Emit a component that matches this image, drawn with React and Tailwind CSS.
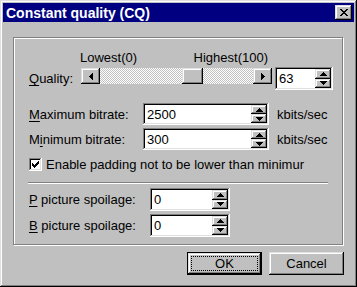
import React from "react";

const raised =
  "shadow-[inset_-1px_-1px_#000,inset_1px_1px_#dfdfdf,inset_-2px_-2px_#808080,inset_2px_2px_#fff]";
const sunken =
  "shadow-[inset_-1px_-1px_#fff,inset_1px_1px_#808080,inset_-2px_-2px_#dfdfdf,inset_2px_2px_#000]";

function Arrow({ dir }) {
  if (dir === "up")
    return (
      <svg width="7" height="4" viewBox="0 0 7 4" shapeRendering="crispEdges">
        <path d="M3 0h1v1h1v1h1v1h1v1H0V3h1V2h1V1h1z" fill="#000" />
      </svg>
    );
  if (dir === "down")
    return (
      <svg width="7" height="4" viewBox="0 0 7 4" shapeRendering="crispEdges">
        <path d="M0 0h7v1H6v1H5v1H4v1H3V3H2V2H1V1H0z" fill="#000" />
      </svg>
    );
  if (dir === "left")
    return (
      <svg width="4" height="7" viewBox="0 0 4 7" shapeRendering="crispEdges">
        <path d="M3 0h1v7H3V6H2V5H1V4H0V3h1V2h1V1h1z" fill="#000" />
      </svg>
    );
  return (
    <svg width="4" height="7" viewBox="0 0 4 7" shapeRendering="crispEdges">
      <path d="M0 0h1v1h1v1h1v1h1v1H3v1H2v1H1v1H0z" fill="#000" />
    </svg>
  );
}

function Spin({ value, w, h }) {
  return (
    <div
      className={`flex bg-white p-[2px] ${sunken}`}
      style={{ width: w, height: h }}
    >
      <div className="flex-1 pl-[2px] leading-[15px] flex items-center text-black">
        {value}
      </div>
      <div className="flex flex-col w-[16px]">
        <div className={`flex-1 bg-[#c0c0c0] flex items-center justify-center ${raised}`}>
          <Arrow dir="up" />
        </div>
        <div className={`flex-1 bg-[#c0c0c0] flex items-center justify-center ${raised}`}>
          <Arrow dir="down" />
        </div>
      </div>
    </div>
  );
}

function U({ children }) {
  return <span className="underline underline-offset-[2px]">{children}</span>;
}

export default function App() {
  return (
    <div
      className="w-[357px] h-[287px] bg-[#c0c0c0] p-[3px] flex flex-col text-[13px] leading-[15px] text-black shadow-[inset_-1px_-1px_#000,inset_1px_1px_#dfdfdf,inset_-2px_-2px_#808080,inset_2px_2px_#fff]"
      style={{ fontFamily: '"Liberation Sans", Arial, sans-serif' }}
    >
      {/* Title bar */}
      <div className="h-[19px] bg-[#000080] flex items-center pl-[3px] pr-[2px]">
        <span className="text-white font-bold text-[14px] leading-[16px]">
          Constant quality (CQ)
        </span>
        <div className={`ml-auto w-[17px] h-[15px] bg-[#c0c0c0] flex items-center justify-center ${raised}`}>
          <svg width="8" height="7" viewBox="0 0 8 7" shapeRendering="crispEdges">
            <path
              d="M0 0h2v1h1v1h2V1h1V0h2v1H7v1H6v1H5v1h1v1h1v1h1v1H6V6H5V5H3v1H2v1H0V6h1V5h1V4h1V3H2V2H1V1H0z"
              fill="#000"
            />
          </svg>
        </div>
      </div>

      {/* Group box */}
      <div className="ml-[10px] mt-[15px] w-[330px] h-[208px] border border-[#808080] shadow-[1px_1px_0_#fff,inset_1px_1px_0_#fff] pl-[15px] flex flex-col">
        {/* labels */}
        <div className="mt-[12px] ml-[51px] w-[192px] flex justify-between pr-[4px]">
          <span>Lowest(0)</span>
          <span>Highest(100)</span>
        </div>
        {/* slider row */}
        <div className="mt-[2px] flex items-start">
          <span className="w-[52px] mt-[4px]">
            <U>Q</U>uality:
          </span>
          <div className="mt-[1px] w-[191px] h-[16px] flex">
            <div className={`w-[19px] h-[16px] bg-[#c0c0c0] flex items-center justify-center ${raised}`}>
              <Arrow dir="left" />
            </div>
            <div className="flex-1 h-[16px] bg-[image:repeating-conic-gradient(#fff_0%_25%,#c0c0c0_0%_50%)] bg-[length:2px_2px] flex">
              <div className={`ml-[82px] w-[21px] h-[16px] bg-[#c0c0c0] ${raised}`} />
            </div>
            <div className={`w-[19px] h-[16px] bg-[#c0c0c0] flex items-center justify-center ${raised}`}>
              <Arrow dir="right" />
            </div>
          </div>
          <div className="ml-[3px]">
            <Spin value="63" w={58} h={23} />
          </div>
        </div>
        {/* max bitrate */}
        <div className="mt-[13px] flex items-center">
          <span className="w-[114px]">
            <U>M</U>aximum bitrate:
          </span>
          <Spin value="2500" w={126} h={22} />
          <span className="ml-[8px]">kbits/sec</span>
        </div>
        {/* min bitrate */}
        <div className="mt-[3px] flex items-center">
          <span className="w-[114px]">
            M<U>i</U>nimum bitrate:
          </span>
          <Spin value="300" w={126} h={22} />
          <span className="ml-[8px]">kbits/sec</span>
        </div>
        {/* checkbox */}
        <div className="mt-[7px] h-[15px] flex items-center">
          <div className={`w-[13px] h-[13px] bg-white flex items-center justify-center ${sunken}`}>
            <svg width="7" height="7" viewBox="0 0 7 7" shapeRendering="crispEdges">
              <path
                d="M6 0h1v3H6v1H5v1H4v1H3v1H2V6H1V5H0V2h1v1h1v1h1V3h1V2h1V1h1z"
                fill="#000"
              />
            </svg>
          </div>
          <span className="ml-[4px] whitespace-nowrap">
            Enable padding not to be lower than minimur
          </span>
        </div>
        {/* separator */}
        <div className="mt-[10px] -ml-[1px] w-[300px] h-[2px] border-t border-t-[#808080] border-b border-b-white" />
        {/* P spoilage */}
        <div className="mt-[4px] flex items-center">
          <span className="w-[121px]">
            <U>P</U> picture spoilage:
          </span>
          <Spin value="0" w={80} h={23} />
        </div>
        {/* B spoilage */}
        <div className="mt-[3px] flex items-center">
          <span className="w-[121px]">
            <U>B</U> picture spoilage:
          </span>
          <Spin value="0" w={80} h={23} />
        </div>
      </div>

      {/* Buttons */}
      <div className="mt-[7px] flex justify-end gap-[7px] pr-[10px]">
        <div className="w-[75px] h-[23px] border border-black">
          <div className={`w-full h-full bg-[#c0c0c0] p-[3px] ${raised}`}>
            <div className="w-full h-full border border-dotted border-black flex items-center justify-center">
              OK
            </div>
          </div>
        </div>
        <div className={`w-[75px] h-[23px] bg-[#c0c0c0] flex items-center justify-center ${raised}`}>
          Cancel
        </div>
      </div>
    </div>
  );
}
